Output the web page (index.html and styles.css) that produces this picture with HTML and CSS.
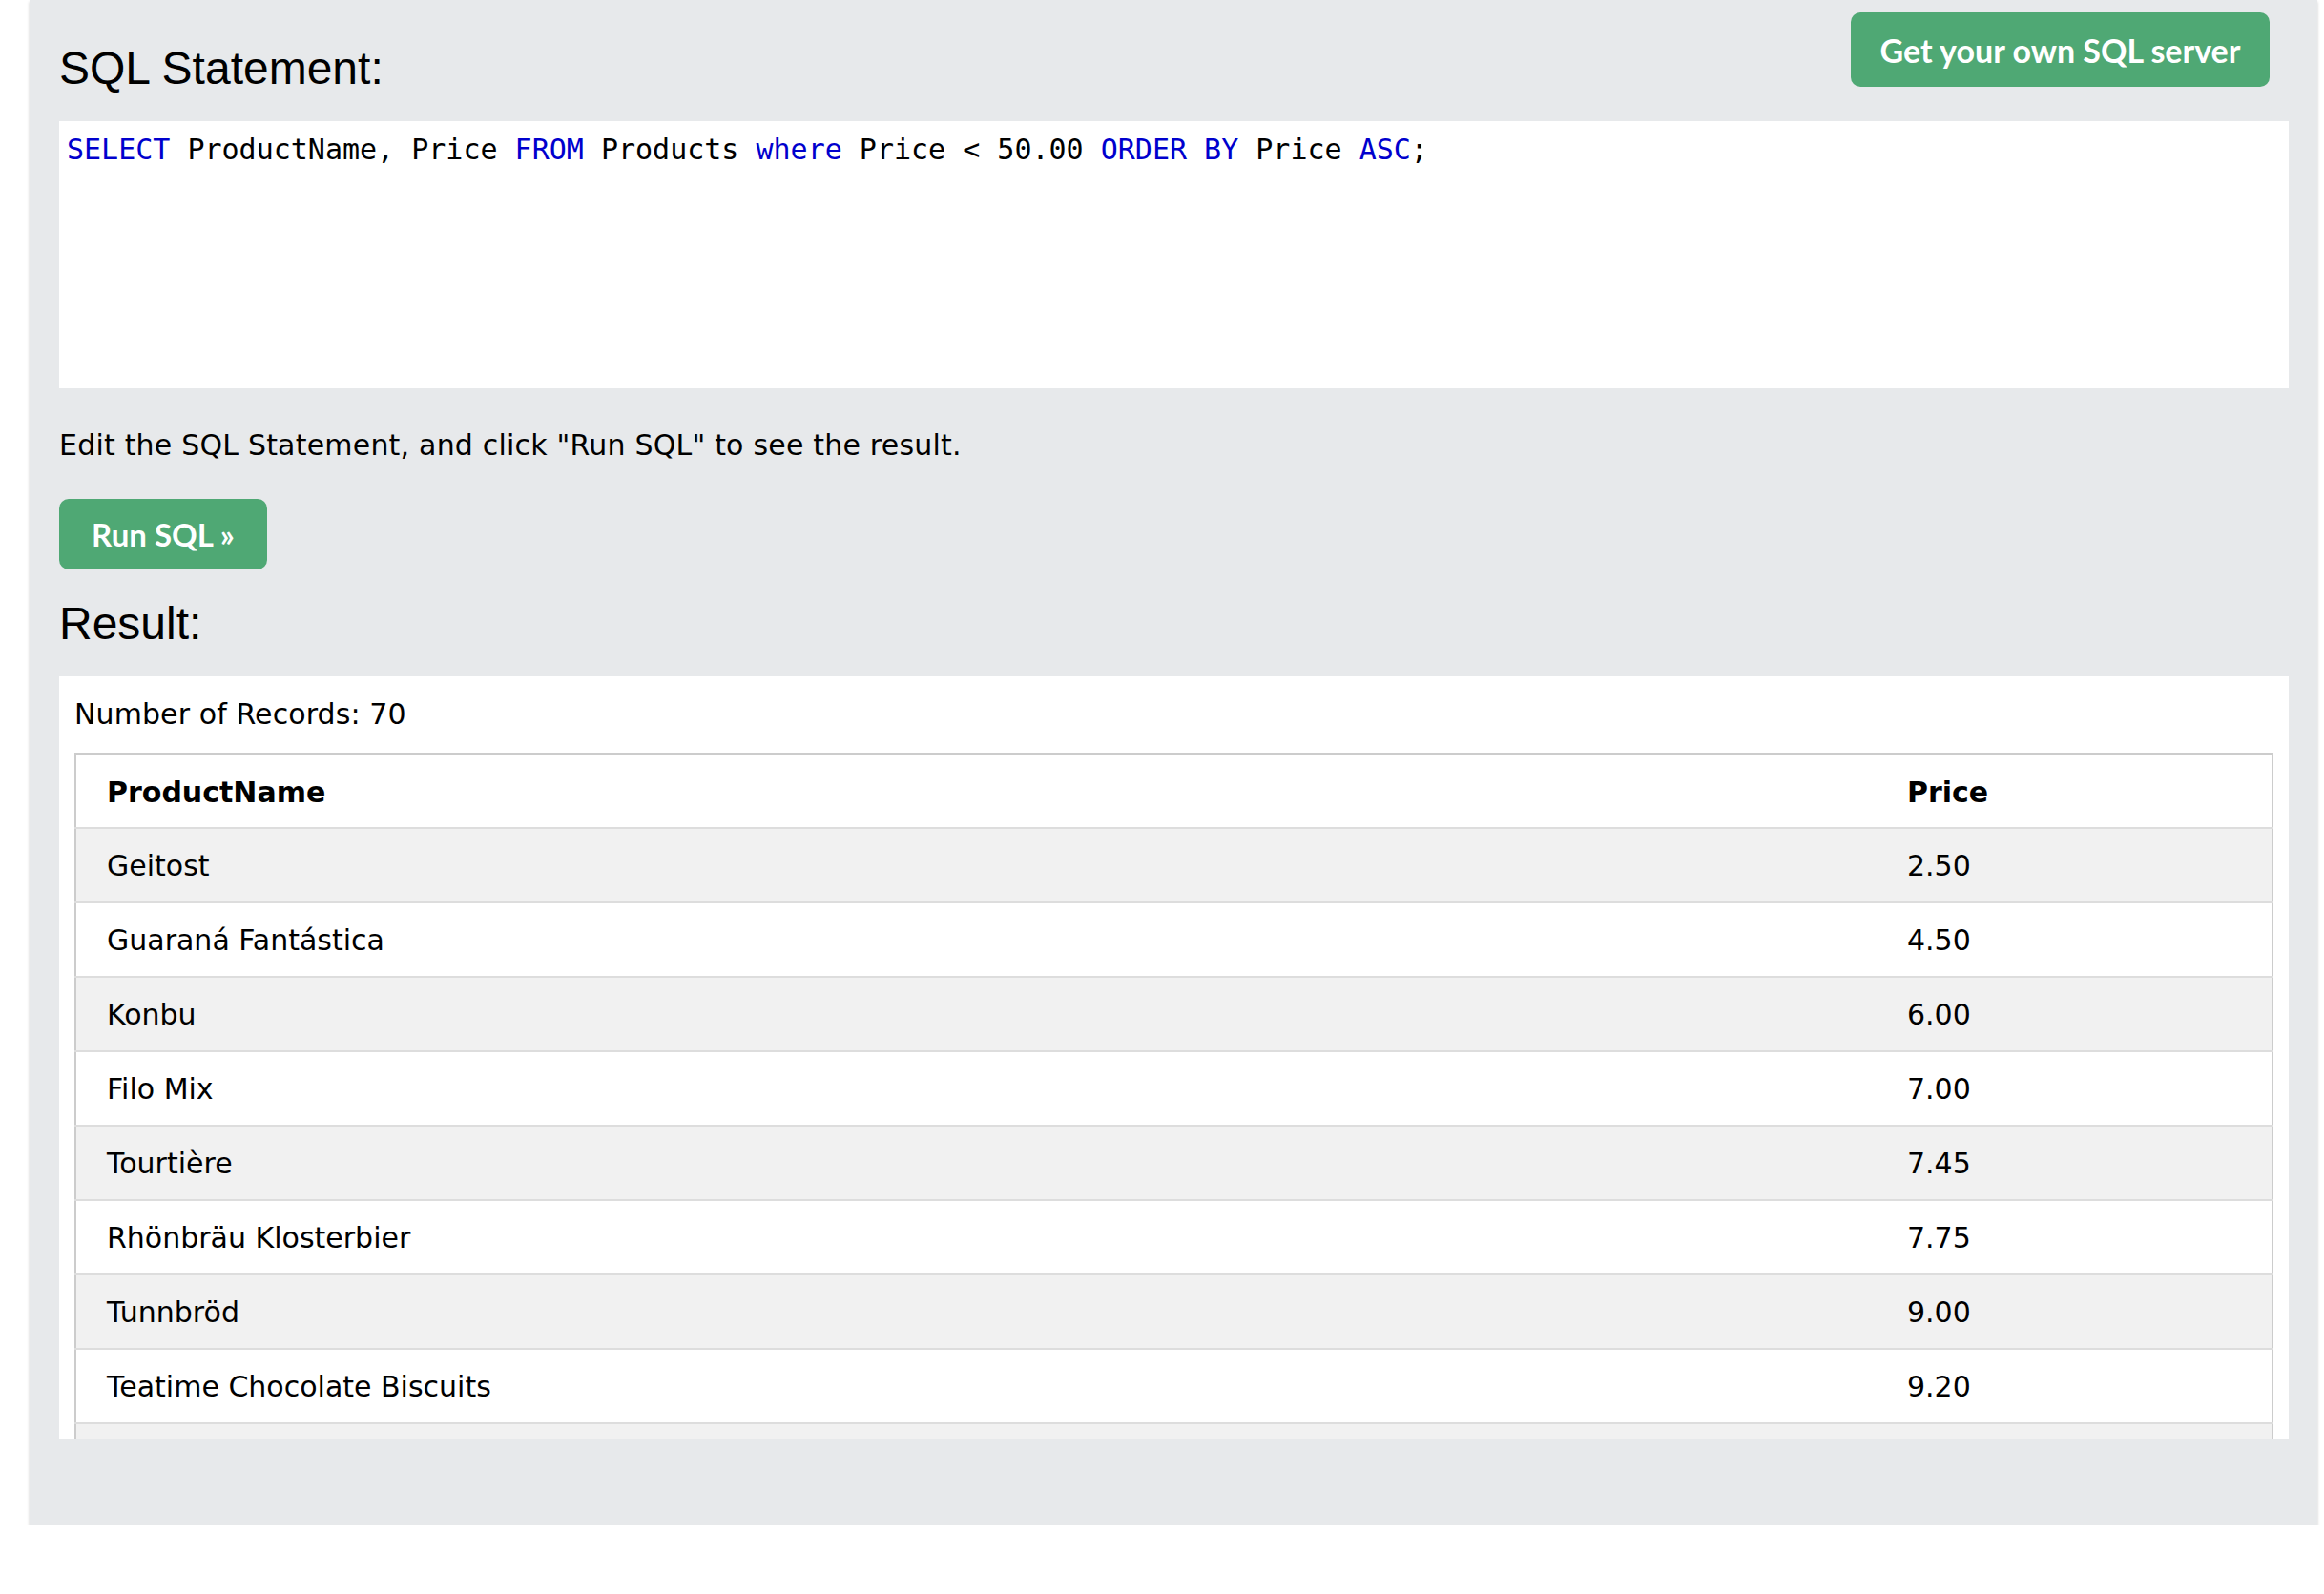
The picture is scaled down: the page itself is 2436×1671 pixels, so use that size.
FILE: index.html
```html
<!DOCTYPE html>
<html lang="en">
<head>
<meta charset="utf-8">
<title>SQL Tryit</title>
<link rel="stylesheet" href="styles.css">
</head>
<body>
<div class="panel">
  <div class="top-row">
    <h2 class="heading heading-first">SQL Statement:</h2>
    <a class="btn btn-server" href="#">Get your own SQL server</a>
  </div>
  <div class="code"><pre class="code-line"><span class="kw">SELECT</span> ProductName, Price <span class="kw">FROM</span> Products <span class="kw">where</span> Price &lt; 50.00 <span class="kw">ORDER BY</span> Price <span class="kw">ASC</span>;</pre></div>
  <p class="hint">Edit the SQL Statement, and click "Run SQL" to see the result.</p>
  <button class="btn btn-run" type="button">Run SQL »</button>
  <h2 class="heading heading-result">Result:</h2>
  <div class="result">
    <div class="count">Number of Records: 70</div>
    <table class="data">
      <thead>
        <tr><th>ProductName</th><th class="price-col">Price</th></tr>
      </thead>
      <tbody>
        <tr><td>Geitost</td><td>2.50</td></tr>
        <tr><td>Guaraná Fantástica</td><td>4.50</td></tr>
        <tr><td>Konbu</td><td>6.00</td></tr>
        <tr><td>Filo Mix</td><td>7.00</td></tr>
        <tr><td>Tourtière</td><td>7.45</td></tr>
        <tr><td>Rhönbräu Klosterbier</td><td>7.75</td></tr>
        <tr><td>Tunnbröd</td><td>9.00</td></tr>
        <tr><td>Teatime Chocolate Biscuits</td><td>9.20</td></tr>
        <tr class="row-more"><td></td><td></td></tr>
      </tbody>
    </table>
  </div>
</div>
</body>
</html>
```
FILE: styles.css
```css
html, body {
  margin: 0;
  padding: 0;
  background: #ffffff;
}

body {
  font-family: "DejaVu Sans", Verdana, sans-serif;
  color: #000;
}

.panel {
  margin: 0 7px 0 31px;
  padding: 0 30px 90px 31px;
  background: #e7e9eb;
  box-shadow: 0 2px 3px rgba(0, 0, 0, 0.2);
  display: flex;
  flex-direction: column;
  align-items: flex-start;
}

.top-row {
  align-self: stretch;
  display: flex;
  justify-content: space-between;
  align-items: flex-start;
}

.heading {
  margin: 0;
  font-family: "Liberation Sans", Arial, sans-serif;
  font-weight: normal;
  font-size: 48px;
  line-height: 56px;
}

.heading-first {
  margin-top: 44px;
}

.btn {
  display: flex;
  align-items: center;
  justify-content: center;
  box-sizing: border-box;
  background: #4fa874;
  color: #ffffff;
  border: none;
  border-radius: 10px;
  font-family: Lato, "Open Sans", sans-serif;
  font-weight: 700;
  font-size: 34px;
  text-decoration: none;
  padding: 0;
}

.btn-server {
  margin: 13px 20px 0 0;
  width: 439px;
  height: 78px;
}

.code {
  align-self: stretch;
  box-sizing: border-box;
  margin-top: 27px;
  height: 280px;
  background: #ffffff;
  padding: 12px 8px;
}

.code-line {
  margin: 0;
  font-family: "DejaVu Sans Mono", Menlo, monospace;
  font-size: 30px;
  line-height: 36px;
  color: #000;
}

.kw {
  color: #0000cd;
}

.hint {
  margin: 37px 0 0;
  font-size: 30px;
  line-height: 45px;
  letter-spacing: 0.2px;
}

.btn-run {
  margin-top: 34px;
  width: 218px;
  height: 74px;
  font-size: 33px;
}

.heading-result {
  margin-top: 29px;
}

.result {
  align-self: stretch;
  box-sizing: border-box;
  margin-top: 27px;
  height: 800px;
  overflow: hidden;
  background: #ffffff;
  padding: 17px 16px 0;
}

.count {
  font-size: 30px;
  line-height: 45px;
  margin-bottom: 18px;
  letter-spacing: 0.1px;
}

.data {
  width: 100%;
  border-collapse: collapse;
  border: 2px solid #cccccc;
  font-size: 30px;
  line-height: 44px;
}

.data tr {
  border-bottom: 2px solid #dddddd;
}

.data tbody tr:nth-child(odd) {
  background: #f1f1f1;
}

.data th,
.data td {
  text-align: left;
  vertical-align: top;
  padding: 17px 16px 15px;
}

.data th {
  font-weight: bold;
  padding-top: 18px;
  padding-bottom: 14px;
}

.data th:first-child,
.data td:first-child {
  padding-left: 32px;
}

.row-more td {
  height: 44px;
}

.price-col {
  width: 366px;
}
```
